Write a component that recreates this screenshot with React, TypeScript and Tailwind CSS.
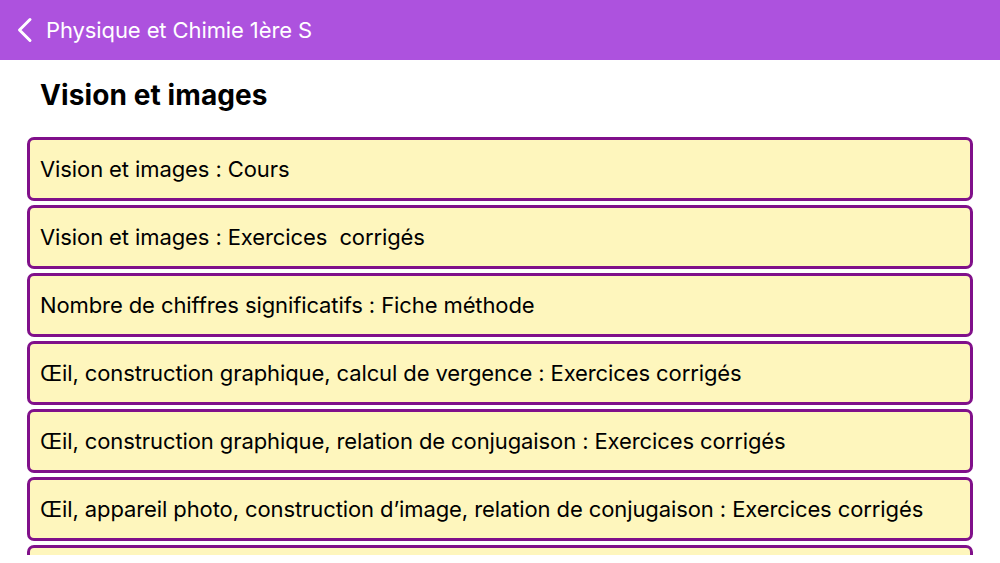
const items = [
  "Vision et images : Cours",
  "Vision et images : Exercices\u00a0 corrigés",
  "Nombre de chiffres significatifs : Fiche méthode",
  "Œil, construction graphique, calcul de vergence : Exercices corrigés",
  "Œil, construction graphique, relation de conjugaison : Exercices corrigés",
  "Œil, appareil photo, construction d’image, relation de conjugaison : Exercices corrigés",
  "",
];

const App = () => {
  return (
    <div
      className="w-[1000px] h-[563px] bg-white overflow-hidden"
      style={{ fontFamily: "Inter, 'Noto Sans', sans-serif" }}
    >
      {/* barre de navigation */}
      <div className="h-[60px] bg-[#ad52de] flex items-center text-white">
        <svg className="w-[24px] h-[30px] ml-[13px]" viewBox="0 0 24 30" fill="none">
          <polyline
            points="17,4.5 6.5,15 17,25.5"
            stroke="currentColor"
            strokeWidth={3}
            strokeLinecap="round"
            strokeLinejoin="round"
          />
        </svg>
        <span className="text-[22px] ml-[9px] tracking-[-0.1px]">Physique et Chimie 1ère S</span>
      </div>

      <div className="h-[495px] overflow-hidden">
        <h1 className="text-[28px] font-bold text-black pl-[40px] pt-[17px] leading-[36px] tracking-[0.1px]">
          Vision et images
        </h1>

        {/* liste des chapitres */}
        <div className="flex flex-col gap-[4px] px-[27px] mt-[24px]">
          {items.map((item, i) => (
            <div
              key={i}
              className="h-[64px] shrink-0 bg-[#fef6bd] border-[3px] border-[#80108a] rounded-[7px] flex items-center pl-[10px] text-[22px] text-black tracking-[-0.1px]"
            >
              {item}
            </div>
          ))}
        </div>
      </div>
    </div>
  );
};

export default App;
